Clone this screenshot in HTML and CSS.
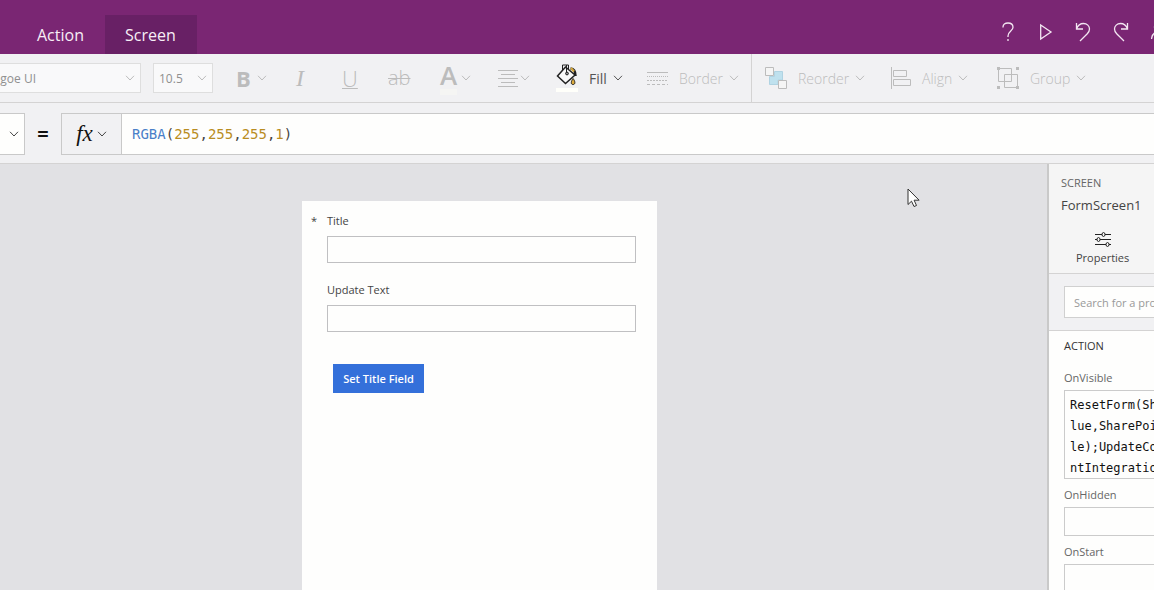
FILE: index.html
```html
<!DOCTYPE html>
<html lang="en">
<head>
<meta charset="utf-8">
<title>FormScreen1</title>
<link rel="stylesheet" href="styles.css">
</head>
<body>
<svg class="defs" aria-hidden="true"><symbol id="chevron" viewBox="0 0 10 6"><path d="M1 .8 5 5 9 .8" fill="none" stroke="currentColor"/></symbol></svg>
<header class="titlebar">
  <nav class="tabs">
    <a class="tab" href="#action">Action</a>
    <a class="tab active" href="#screen">Screen</a>
  </nav>
  <div class="commands">
    <button type="button" aria-label="Help"><svg width="14" height="20" viewBox="-1 0 14 20"><path d="M1 5.500V5C1 2.500 3 1 6 1s5 1.700 5 4.200C11 9 6 9 6 14v1M6 17v2"/></svg></button>
    <button type="button" aria-label="Preview"><svg width="16" height="20" viewBox="-3 0 16 20"><path d="M.7 3 11 10 .7 17z"/></svg></button>
    <button type="button" aria-label="Undo"><svg width="16" height="20" viewBox="0 0 16 20"><path d="M1.500 1v6H8M1.500 7C3 3 5.500 1.500 8.500 1.500c3.500 0 6 2.500 6 5.500 0 2-.8 3.300-2.200 4.700L5 19"/></svg></button>
    <button type="button" aria-label="Redo"><svg width="16" height="20" viewBox="0 0 16 20"><path d="M14.500 1v6H8M14.500 7C13 3 10.500 1.500 7.500 1.500c-3.500 0-6 2.500-6 5.500 0 2 .8 3.300 2.200 4.700L11 19"/></svg></button>
    <button type="button" aria-label="Account"><svg width="18" height="20" viewBox="0 0 18 20"><circle cx="8" cy="5" r="4.500"/><path d="M.5 17c.5-4 3-7 7-7"/></svg></button>
  </div>
</header>

<div class="toolbar">
  <div class="picker font"><select aria-label="Font" disabled><option>Segoe UI</option></select><svg class="chev"><use href="#chevron"/></svg></div>
  <div class="picker size"><select aria-label="Font size" disabled><option>10.5</option></select><svg class="chev"><use href="#chevron"/></svg></div>
  <button type="button" disabled aria-label="Bold"><b class="glyph bold">B</b><svg class="chev"><use href="#chevron"/></svg></button>
  <button type="button" disabled aria-label="Italic"><i class="glyph serif">I</i></button>
  <button type="button" disabled aria-label="Underline"><span class="glyph under">U</span></button>
  <button type="button" disabled aria-label="Strikethrough"><s class="glyph strike">ab</s></button>
  <button type="button" disabled class="tight" aria-label="Font colour"><span class="swatch">A</span><svg class="chev"><use href="#chevron"/></svg></button>
  <button type="button" disabled class="tight" aria-label="Text alignment"><svg width="20" height="18" viewBox="0 0 20 18" stroke="currentColor"><path d="M0 1.500h20M3 5.500h14M0 9.500h20M3 13.500h14M0 17.500h20"/></svg><svg class="chev"><use href="#chevron"/></svg></button>
  <button type="button" class="fill"><svg width="22" height="28" viewBox="0 0 22 28"><path d="M0 24h22v4H0z" fill="#fffffa"/><path d="M6.500 8V1h6v6" fill="none" stroke="#222"/><path d="M9.500 3 19 11 9.500 19.500 1.500 12z" fill="#fafafa" stroke="#222" stroke-width="1.500"/><path d="M10.500 1v8.500" stroke="#222"/><circle cx="11" cy="9.500" r="1.400" fill="#999" stroke="#222"/><path d="M14.500 4.500c3 .3 5 2.500 5 7.500" fill="none" stroke="#222" stroke-width="2.500"/><path d="m15 4 3 3.500" stroke="#d7a93c" stroke-width="2"/><path d="M17 14.500c-2 3-2.500 6 0 6s2.500-3 0-6" fill="#dfad3d" stroke="#222"/></svg><span>Fill</span><svg class="chev"><use href="#chevron"/></svg></button>
  <button type="button" disabled><svg width="21" height="13" viewBox="0 0 21 13" fill="none" stroke="currentColor"><path d="M0 .5h21"/><path stroke-dasharray="1 1" d="M0 4.500h21"/><path stroke-dasharray="2 1" d="M0 8.500h21"/><path stroke-dasharray="3 2" d="M0 12.500h21"/></svg><span>Border</span><svg class="chev"><use href="#chevron"/></svg></button>
  <span class="divider"></span>
  <button type="button" disabled><svg width="22" height="22" viewBox="0 0 22 22"><path d="M9.500 4.500h8V13h-4.500v4.500h-8.500v-8h5z" fill="#bfe1ee" stroke="#b0d3e2"/><g fill="#f5f5f5" stroke="currentColor"><path d="M.5.5h8v8h-8zM13.500 13.500h8v8h-8z"/></g></svg><span>Reorder</span><svg class="chev"><use href="#chevron"/></svg></button>
  <button type="button" disabled><svg width="20" height="22" viewBox="0 0 20 22" fill="none" stroke="currentColor"><path d="M.5 0v22M2.500 3.500h13v6h-13zM2.500 12.500h17v6h-17z"/></svg><span>Align</span><svg class="chev"><use href="#chevron"/></svg></button>
  <button type="button" disabled><svg width="22" height="22" viewBox="0 0 22 22" fill="none" stroke="currentColor"><path d="M3 1.500h11.500v13h-13V3M7.500 7.500h13V19M19 20.500H7.500v-13"/><path d="M0 0h3v3H0zM19 0h3v3h-3zM0 19h3v3H0zM19 19h3v3h-3z" fill="currentColor" stroke="none"/></svg><span>Group</span><svg class="chev"><use href="#chevron"/></svg></button>
</div>

<div class="formula">
  <div class="picker property"><select aria-label="Property"><option>Fill</option></select><svg class="chev"><use href="#chevron"/></svg></div>
  <span class="equals">=</span>
  <button type="button" class="fx"><i>fx</i><svg class="chev"><use href="#chevron"/></svg></button>
  <code class="expression"><span class="fn">RGBA</span>(<span class="num">255</span>,<span class="num">255</span>,<span class="num">255</span>,<span class="num">1</span>)</code>
</div>

<main class="workspace">
  <section class="stage">
    <form class="screen">
      <div class="field required"><label for="title">Title</label><input id="title" type="text"></div>
      <div class="field"><label for="update">Update Text</label><input id="update" type="text"></div>
      <button type="button" class="primary">Set Title Field</button>
    </form>
    <svg class="pointer" width="14" height="20" viewBox="0 0 14 20"><path d="M1 1v15.500l3.500-3.300 2.500 5.300 2.500-1-2.400-5.300h5z" fill="#fff" stroke="#333"/></svg>
  </section>
  <aside class="panel">
    <div class="panel-head">
      <div class="kind">SCREEN</div>
      <div class="name">FormScreen1</div>
      <button type="button" class="properties"><svg width="16" height="15" viewBox="0 0 16 15" fill="#f5f5f5" stroke="#222"><path d="M0 2.500h16M0 7.500h16M0 12.500h16"/><ellipse cx="8.500" cy="2.500" rx="1.500" ry="2"/><ellipse cx="3.500" cy="7.500" rx="1.500" ry="2"/><ellipse cx="12.500" cy="12.500" rx="1.500" ry="2"/></svg>Properties</button>
    </div>
    <div class="search"><input type="text" aria-label="Search" placeholder="Search for a property"></div>
    <div class="props">
      <h2>ACTION</h2>
      <label for="visible">OnVisible</label>
      <textarea id="visible" rows="4">ResetForm(Sh
lue,SharePoi
le);UpdateCo
ntIntegratio</textarea>
      <label for="hidden">OnHidden</label>
      <input id="hidden" type="text">
      <label for="start">OnStart</label>
      <input id="start" type="text">
    </div>
  </aside>
</main>
</body>
</html>
```
FILE: styles.css
```css
* { box-sizing: border-box; }
body {
  margin: 0;
  height: 100vh;
  overflow: hidden;
  display: flex;
  flex-direction: column;
  font-family: "Open Sans", "Noto Sans", sans-serif;
  font-size: 14px;
  color: #444;
  background: #f1f1f3;
}
button, input, select, textarea { font: inherit; color: inherit; margin: 0; border-radius: 0; }
button { border: 0; padding: 0; background: none; }
svg { display: block; flex: none; }
.defs { position: absolute; width: 0; height: 0; }
.chev { width: 10px; height: 6px; }

.titlebar {
  display: flex;
  justify-content: space-between;
  align-items: flex-end;
  height: 54px;
  flex: none;
  background: #7a2673;
  overflow: hidden;
}
.tabs { display: flex; padding-left: 16px; }
.tab {
  height: 39px;
  padding: 0 21px;
  line-height: 40px;
  font-size: 16px;
  color: #f7eef6;
  text-decoration: none;
}
.tab.active { background: #682065; padding-left: 20px; }
.commands { display: flex; gap: 22px; margin-right: -15px; padding-bottom: 12px; }
.commands svg { fill: none; stroke: #f3e6f2; stroke-width: 1.3; }

.toolbar {
  display: grid;
  grid-template-columns: 153px 83px 60px 46px 46px 52px 58px 58px 91px 104px 14px 126px 106px 1fr;
  align-items: center;
  height: 49px;
  flex: none;
  border-bottom: 1px solid #d4d3d3;
  color: #bcbcbc;
}
.toolbar button { display: flex; align-items: center; gap: 6px; color: #bcbcbc; font-weight: 300; }
.toolbar button > svg:first-child { margin-right: 5px; }
.toolbar button.tight { gap: 4px; }
.toolbar button.tight > svg:first-child { margin-right: -2px; }
.toolbar button.fill { color: #555; font-weight: 400; }
.glyph { font-size: 22px; line-height: 28px; }
.bold { font-weight: 700; }
.serif { font-family: "Liberation Serif", serif; font-size: 24px; }
.under { text-decoration: underline; text-decoration-thickness: 1px; }
.strike { font-size: 20px; text-decoration-thickness: 1px; }
.swatch { font-size: 26px; font-weight: 600; line-height: 28px; border-bottom: 6px solid #f5f5f3; }
.divider { height: 48px; border-left: 1px solid #d4d3d3; }

.picker { display: grid; align-items: center; }
.picker > * { grid-area: 1 / 1; }
.picker .chev { justify-self: end; margin-right: 6px; pointer-events: none; }
.picker select {
  appearance: none;
  width: 100%;
  height: 30px;
  padding: 0 5px;
  border: 1px solid #dedede;
  background: #f9f9fa;
  color: #909090;
  font-size: 12px;
  opacity: 1;
}
.picker.font { width: 161px; margin-left: -20px; }
.picker.font select { padding-left: 6px; }
.picker.size { width: 60px; }

.formula {
  display: flex;
  align-items: center;
  height: 61px;
  padding-top: 1px;
  flex: none;
  border-bottom: 1px solid #d4d3d3;
}
.picker.property { width: 125px; margin-left: -100px; color: #444; }
.picker.property select { height: 42px; background: #fefefd; border-color: #c9c9c9; }
.equals { width: 36px; text-align: center; font-size: 20px; font-weight: 700; color: #111; }
.fx {
  display: flex;
  align-items: center;
  justify-content: center;
  gap: 4px;
  width: 61px;
  height: 42px;
  border: 1px solid #c9c9c9;
}
.fx i { font-family: "Liberation Serif", serif; font-size: 23px; line-height: 28px; color: #111; }
.expression {
  flex: 1;
  height: 42px;
  padding-left: 10px;
  line-height: 40px;
  border: solid #c9c9c9;
  border-width: 1px 0;
  background: #fefefd;
  font-family: "DejaVu Sans Mono", monospace;
  font-size: 14px;
}
.fn { color: #4a80c8; }
.num { color: #b98d22; }

.workspace { flex: 1; min-height: 0; display: flex; }
.stage {
  position: relative;
  flex: 1;
  display: flex;
  justify-content: center;
  padding: 37px 88px 0 0;
  background: #e1e1e4;
}
.pointer { position: absolute; left: 907px; top: 24px; }
.screen {
  width: 355px;
  padding: 12px 21px 0 25px;
  background: #fefefd;
  font-size: 11px;
}
.field { position: relative; display: flex; flex-direction: column; gap: 7px; margin-bottom: 19px; line-height: 16px; }
.field.required::before { content: "*"; position: absolute; left: -16px; }
.field input { width: 100%; height: 27px; border: 1px solid #c0c0c2; background: #fefefd; }
.primary {
  margin: 13px 0 0 6px;
  width: 91px;
  height: 29px;
  background: #3470da;
  color: #fff;
  font-weight: 600;
  font-size: 11px;
}

.panel {
  flex: none;
  width: 107px;
  overflow: hidden;
  border-left: 2px solid #c9c9c9;
  background: #fefefd;
}
.panel > div { width: 300px; }
.panel-head { padding: 10px 0 8px 12px; background: #f5f5f5; border-bottom: 1px solid #d4d3d3; }
.kind { font-size: 11px; line-height: 18px; color: #666; }
.name { font-size: 13px; line-height: 26px; }
.properties {
  display: flex;
  flex-direction: column;
  align-items: center;
  gap: 3px;
  margin: 14px 0 0 15px;
  font-size: 11px;
  line-height: 15px;
}
.search { padding: 12px 15px; background: #f1f1f3; border-bottom: 1px solid #d4d3d3; }
.search input { display: block; width: 100%; height: 32px; padding: 0 9px; border: 1px solid #d0d0d0; background: #fefefd; font-size: 11px; }
.search input::placeholder { color: #999; }
.props { padding: 5px 15px 0; }
.props h2 { margin: 0 0 12px; font-size: 11px; line-height: 20px; font-weight: 400; color: #333; }
.props label { display: block; font-size: 11px; line-height: 20px; margin-bottom: 2px; color: #666; }
.props input, .props textarea { display: block; width: 100%; margin-bottom: 6px; border: 1px solid #cbcbcb; background: #fefefd; }
.props input { height: 29px; }
.props textarea {
  height: 89px;
  padding: 4px 5px;
  resize: none;
  overflow: hidden;
  font-family: "DejaVu Sans Mono", monospace;
  font-size: 12px;
  line-height: 21px;
  color: #111;
}
```
